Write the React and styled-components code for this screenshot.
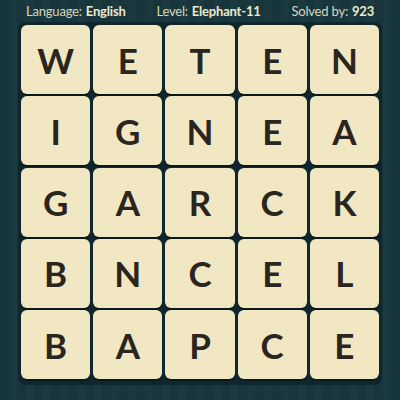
import styled, { createGlobalStyle } from "styled-components";

const Global = createGlobalStyle`
  html, body {
    margin: 0;
    padding: 0;
  }
  body {
    width: 400px;
    height: 400px;
    overflow: hidden;
    background: repeating-linear-gradient(
      90deg,
      #18353b 0px,
      #18353b 9px,
      #1b3a40 9px,
      #1b3a40 17px
    );
    font-family: Lato, "Open Sans", sans-serif;
  }
`;

const Page = styled.div`
  width: 400px;
  height: 400px;
  display: flex;
  flex-direction: column;
`;

const Header = styled.div`
  height: 22px;
  display: flex;
  align-items: center;
  justify-content: space-between;
  padding: 0 26px 0 26px;
  font-size: 13px;
  color: #d9d5bd;
  letter-spacing: -0.2px;
`;

const Stat = styled.span`
  strong {
    font-weight: 700;
    color: #efe9cc;
    margin-left: 4px;
  }
`;

const Board = styled.div`
  margin: 0 18px;
  padding: 3px 3px 6px;
  background: #0f272c;
  border-radius: 8px;
  display: grid;
  grid-template-columns: repeat(5, 1fr);
  grid-auto-rows: 69px;
  gap: 2.3px 3px;
`;

const Tile = styled.div`
  background: #f1e8c3;
  border-radius: 6px;
  box-shadow: 0 2px 0 #081a1e;
  display: flex;
  align-items: center;
  justify-content: center;
  font-family: Lato, sans-serif;
  font-weight: 700;
  font-size: 35px;
  color: #2b251f;
`;

const letters = [
  "WETEN",
  "IGNEA",
  "GARCK",
  "BNCEL",
  "BAPCE",
];

export default function App() {
  return (
    <Page>
      <Global />
      <Header>
        <Stat>
          Language:<strong>English</strong>
        </Stat>
        <Stat>
          Level:<strong>Elephant-11</strong>
        </Stat>
        <Stat>
          Solved by:<strong>923</strong>
        </Stat>
      </Header>
      <Board>
        {letters.flatMap((row, r) =>
          row.split("").map((ch, c) => <Tile key={`${r}-${c}`}>{ch}</Tile>)
        )}
      </Board>
    </Page>
  );
}
